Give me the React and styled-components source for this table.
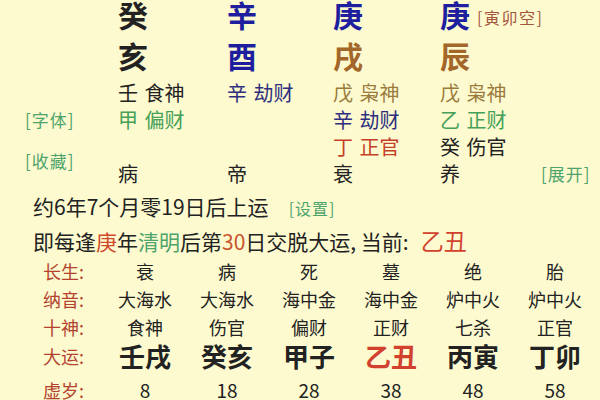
import React from "react";
import styled, { createGlobalStyle } from "styled-components";

const GlobalStyle = createGlobalStyle`
  html, body {
    margin: 0;
    padding: 0;
    background: #fdfacf;
    overflow: hidden;
  }
  body {
    font-family: "Noto Sans CJK SC", "Noto Sans", sans-serif;
    color: #222;
  }
`;

const C = {
  black: "#222",
  blue: "#1e1e9e",
  navy: "#2e2e7e",
  brown: "#a4672a",
  olive: "#9a7b3c",
  green: "#45a058",
  red: "#c4402a",
  label: "#b3432f",
  tag: "#a3553e",
  link: "#4ea46c",
};

const Page = styled.div`
  width: 600px;
  height: 400px;
`;

const Pillars = styled.div`
  display: grid;
  grid-template-columns: 118px 109px 106px 107px 101px auto;
  grid-template-rows: 40px 39px 27px 27px 27px 27px;
`;

const Stem = styled.div`
  grid-row: 1;
  grid-column: ${(p) => p.col};
  align-self: start;
  font-size: 30px;
  font-weight: 700;
  line-height: 28px;
  color: ${(p) => p.color};
  white-space: nowrap;
`;

const Branch = styled(Stem)`
  grid-row: 2;
  line-height: 30px;
`;

const Empty = styled.span`
  font-size: 16px;
  font-weight: 400;
  color: ${C.tag};
  margin-left: 7px;
  vertical-align: 3px;
  letter-spacing: 1.5px;
`;

const Hidden = styled.div`
  grid-row: ${(p) => p.row};
  grid-column: ${(p) => p.col};
  font-size: 20px;
  line-height: 27px;
  word-spacing: 2px;
  color: ${(p) => p.color || C.black};
  white-space: nowrap;
`;

const SideLink = styled.div`
  grid-column: ${(p) => p.col};
  grid-row: ${(p) => p.row};
  align-self: center;
  padding-left: ${(p) => p.pad || 0}px;
  font-size: 17px;
  color: ${C.link};
  letter-spacing: 1px;
`;

const Info = styled.div`
  padding: 3px 0 0 33px;
`;

const Line = styled.div`
  font-size: 21px;
  line-height: 32px;
  white-space: nowrap;
`;

const Hi = styled.span`
  color: ${(p) => p.color};
  font-size: ${(p) => p.size || "inherit"};
  margin-left: ${(p) => p.gap || 0}px;
`;

const Setting = styled.span`
  font-size: 16px;
  color: ${C.link};
  margin-left: 20px;
  letter-spacing: 1px;
`;

const Table = styled.div`
  display: grid;
  grid-template-columns: 61px repeat(6, 82px);
  grid-auto-rows: 28px;
  padding: 0 0 0 43px;
`;

const Label = styled.div`
  font-size: 18px;
  line-height: ${(p) => p.h || 28}px;
  color: ${C.label};
`;

const Cell = styled.div`
  text-align: center;
  font-size: ${(p) => p.size || 18}px;
  font-weight: ${(p) => (p.bold ? 700 : 400)};
  line-height: ${(p) => p.h || 28}px;
  color: ${(p) => p.color || C.black};
`;

const pillars = [
  { stem: "癸", sc: C.black, branch: "亥", bc: C.black, hidden: [["壬 食神", C.black], ["甲 偏财", C.green]], life: "病" },
  { stem: "辛", sc: C.blue, branch: "酉", bc: C.blue, hidden: [["辛 劫财", C.navy]], life: "帝" },
  { stem: "庚", sc: C.blue, branch: "戌", bc: C.brown, hidden: [["戊 枭神", C.olive], ["辛 劫财", C.navy], ["丁 正官", C.red]], life: "衰" },
  { stem: "庚", sc: C.blue, branch: "辰", bc: C.brown, hidden: [["戊 枭神", C.olive], ["乙 正财", C.green], ["癸 伤官", C.black]], life: "养", empty: "[寅卯空]" },
];

const rows = [
  { label: "长生:", cells: ["衰", "病", "死", "墓", "绝", "胎"] },
  { label: "纳音:", cells: ["大海水", "大海水", "海中金", "海中金", "炉中火", "炉中火"] },
  { label: "十神:", cells: ["食神", "伤官", "偏财", "正财", "七杀", "正官"] },
];

const luck = ["壬戌", "癸亥", "甲子", "乙丑", "丙寅", "丁卯"];
const ages = ["8", "18", "28", "38", "48", "58"];

export default function App() {
  return (
    <Page>
      <GlobalStyle />
      <Pillars>
        {pillars.map((p, i) => (
          <React.Fragment key={i}>
            <Stem col={i + 2} color={p.sc}>
              {p.stem}
              {p.empty && <Empty>{p.empty}</Empty>}
            </Stem>
            <Branch col={i + 2} color={p.bc}>
              {p.branch}
            </Branch>
            {p.hidden.map(([t, c], j) => (
              <Hidden key={j} row={j + 3} col={i + 2} color={c}>
                {t}
              </Hidden>
            ))}
            <Hidden row={6} col={i + 2}>
              {p.life}
            </Hidden>
          </React.Fragment>
        ))}
        <SideLink col={1} row={4} pad={25}>[字体]</SideLink>
        <SideLink col={1} row="5 / 7" pad={25}>[收藏]</SideLink>
        <SideLink col={6} row={6}>[展开]</SideLink>
      </Pillars>

      <Info>
        <Line>
          约6年7个月零19日后上运<Setting>[设置]</Setting>
        </Line>
        <Line>
          即每逢<Hi color="#cf4a2c">庚</Hi>年<Hi color={C.link}>清明</Hi>后第
          <Hi color="#c9542e">30</Hi>日交脱大运, 当前:
          <Hi color="#d2412e" size="23px" gap={12}>乙丑</Hi>
        </Line>
      </Info>

      <Table>
        {rows.map((r) => (
          <React.Fragment key={r.label}>
            <Label>{r.label}</Label>
            {r.cells.map((c, i) => (
              <Cell key={i}>{c}</Cell>
            ))}
          </React.Fragment>
        ))}
        <Label h={30}>大运:</Label>
        {luck.map((c, i) => (
          <Cell key={i} h={30} size={26} bold color={c === "乙丑" ? "#d2412e" : C.black}>
            {c}
          </Cell>
        ))}
        <Label h={42}>虚岁:</Label>
        {ages.map((c, i) => (
          <Cell key={i} h={42} size={19}>
            {c}
          </Cell>
        ))}
      </Table>
    </Page>
  );
}
